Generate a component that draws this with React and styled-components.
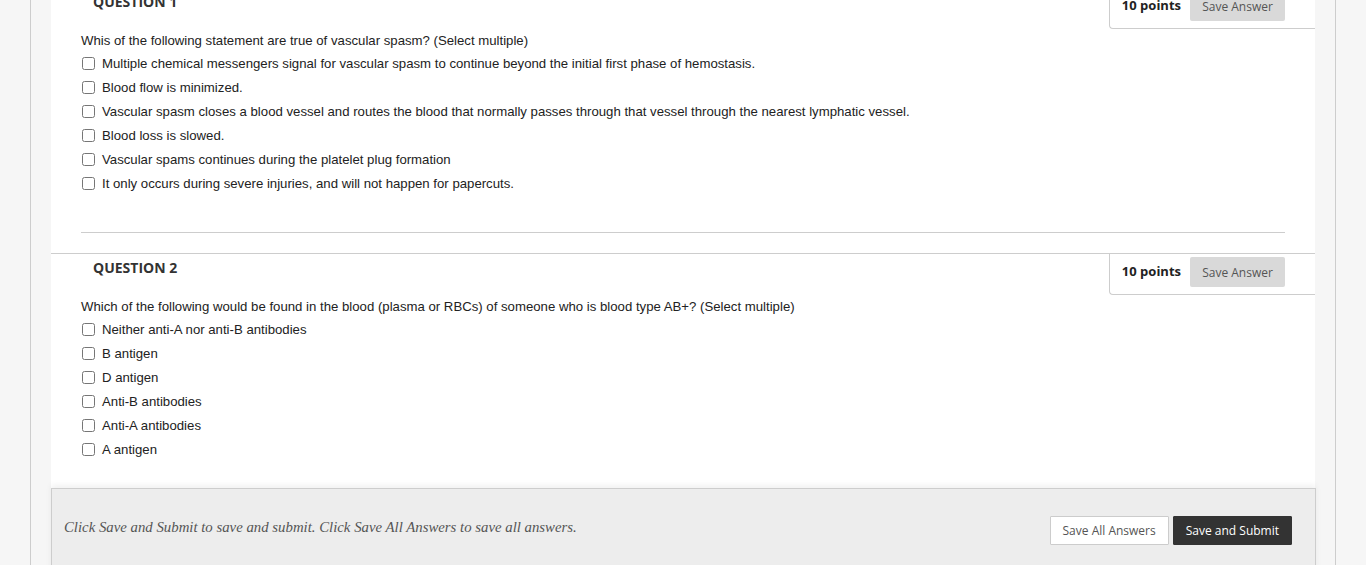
import styled, { createGlobalStyle } from "styled-components";

const questions = [
    {
        id: 1,
        text: "Whis of the following statement are true of vascular spasm? (Select multiple)",
        options: [
            "Multiple chemical messengers signal for vascular spasm to continue beyond the initial first phase of hemostasis.",
            "Blood flow is minimized.",
            "Vascular spasm closes a blood vessel and routes the blood that normally passes through that vessel through the nearest lymphatic vessel.",
            "Blood loss is slowed.",
            "Vascular spams continues during the platelet plug formation",
            "It only occurs during severe injuries, and will not happen for papercuts.",
        ],
    },
    {
        id: 2,
        text: "Which of the following would be found in the blood (plasma or RBCs) of someone who is blood type AB+? (Select multiple)",
        options: [
            "Neither anti-A nor anti-B antibodies",
            "B antigen",
            "D antigen",
            "Anti-B antibodies",
            "Anti-A antibodies",
            "A antigen",
        ],
    },
];

export default function App() {
    return (
        <>
            <Global />
            <Page>
                <Container>
                    <Panel>
                        {questions.map((q, i) => (
                            <Question key={q.id}>
                                <Header>
                                    <Title>Question {q.id}</Title>
                                    <Points>
                                        <strong>10 points</strong>
                                        <SaveAnswer>Save Answer</SaveAnswer>
                                    </Points>
                                </Header>
                                <Body $last={i === questions.length - 1}>
                                    <Prompt>{q.text}</Prompt>
                                    {q.options.map((opt) => (
                                        <Option key={opt}>
                                            <input type="checkbox" />
                                            {opt}
                                        </Option>
                                    ))}
                                </Body>
                                {i < questions.length - 1 && <Divider />}
                            </Question>
                        ))}
                    </Panel>
                    <Footer>
                        <FooterText>
                            Click Save and Submit to save and submit. Click Save All Answers to save all answers.
                        </FooterText>
                        <Actions>
                            <Button>Save All Answers</Button>
                            <Button $dark>Save and Submit</Button>
                        </Actions>
                    </Footer>
                </Container>
            </Page>
        </>
    );
}

const Global = createGlobalStyle`
body {
    margin: 0;
    background: #f6f6f6;
    font-family: "Liberation Sans", Arial, sans-serif;
    color: #333;
    overflow: hidden;
}
`;

const Page = styled.div`
padding: 0 30px;
`;

const Container = styled.div`
border-left: 1px solid #cdcdcd;
border-right: 1px solid #cdcdcd;
padding: 0 20px;
background: #f6f6f6;
`;

const Panel = styled.div`
background: #fff;
margin-top: -13px;
`;

const Question = styled.section`
border-top: 1px solid #cdcdcd;
`;

const Header = styled.div`
display: flex;
justify-content: space-between;
align-items: flex-start;
`;

const Title = styled.h3`
margin: 0;
padding: 4px 0 0 42px;
font-family: "Open Sans", sans-serif;
font-size: 14px;
line-height: 20px;
font-weight: 700;
text-transform: uppercase;
color: #333;
`;

const Points = styled.div`
display: flex;
align-items: center;
gap: 9px;
padding: 3px 30px 7px 12px;
border-left: 1px solid #cdcdcd;
border-bottom: 1px solid #cdcdcd;
border-bottom-left-radius: 4px;
font-family: "Open Sans", sans-serif;
font-size: 13px;
color: #222;
strong {
    font-weight: 700;
    margin-top: -2px;
}
`;

const SaveAnswer = styled.button`
height: 30px;
width: 95px;
border: none;
border-radius: 2px;
background: #d9d9d9;
color: #555;
font-family: "Open Sans", sans-serif;
font-size: 12px;
padding: 0;
`;

const Body = styled.div`
padding: 1px 30px ${(p) => (p.$last ? "27px" : "37px")};
`;

const Prompt = styled.p`
margin: 0;
font-size: 13.2px;
line-height: 21px;
color: #222;
`;

const Option = styled.label`
display: flex;
align-items: center;
height: 24px;
font-size: 13.2px;
color: #222;
input {
    width: 13px;
    height: 13px;
    margin: 0 7px 0 1px;
}
`;

const Divider = styled.hr`
margin: 0 30px 20px;
border: none;
border-top: 1px solid #cdcdcd;
`;

const Footer = styled.div`
display: flex;
justify-content: space-between;
align-items: flex-start;
margin-right: -1px;
padding: 27px 23px 30px 12px;
background: #ededed;
border: 1px solid #cdcdcd;
box-shadow: 0 -3px 6px rgba(0, 0, 0, 0.06);
`;

const FooterText = styled.p`
margin: 0;
padding-top: 1px;
font-family: "Liberation Serif", Georgia, serif;
font-style: italic;
font-size: 14.8px;
line-height: 20px;
color: #555;
`;

const Actions = styled.div`
display: flex;
gap: 4px;
`;

const Button = styled.button`
height: 29px;
padding: 0 12px;
border: 1px solid ${(p) => (p.$dark ? "#333" : "#ccc")};
background: ${(p) => (p.$dark ? "#333" : "#fff")};
color: ${(p) => (p.$dark ? "#fff" : "#555")};
font-family: "Open Sans", sans-serif;
font-size: 12px;
border-radius: 1px;
`;
